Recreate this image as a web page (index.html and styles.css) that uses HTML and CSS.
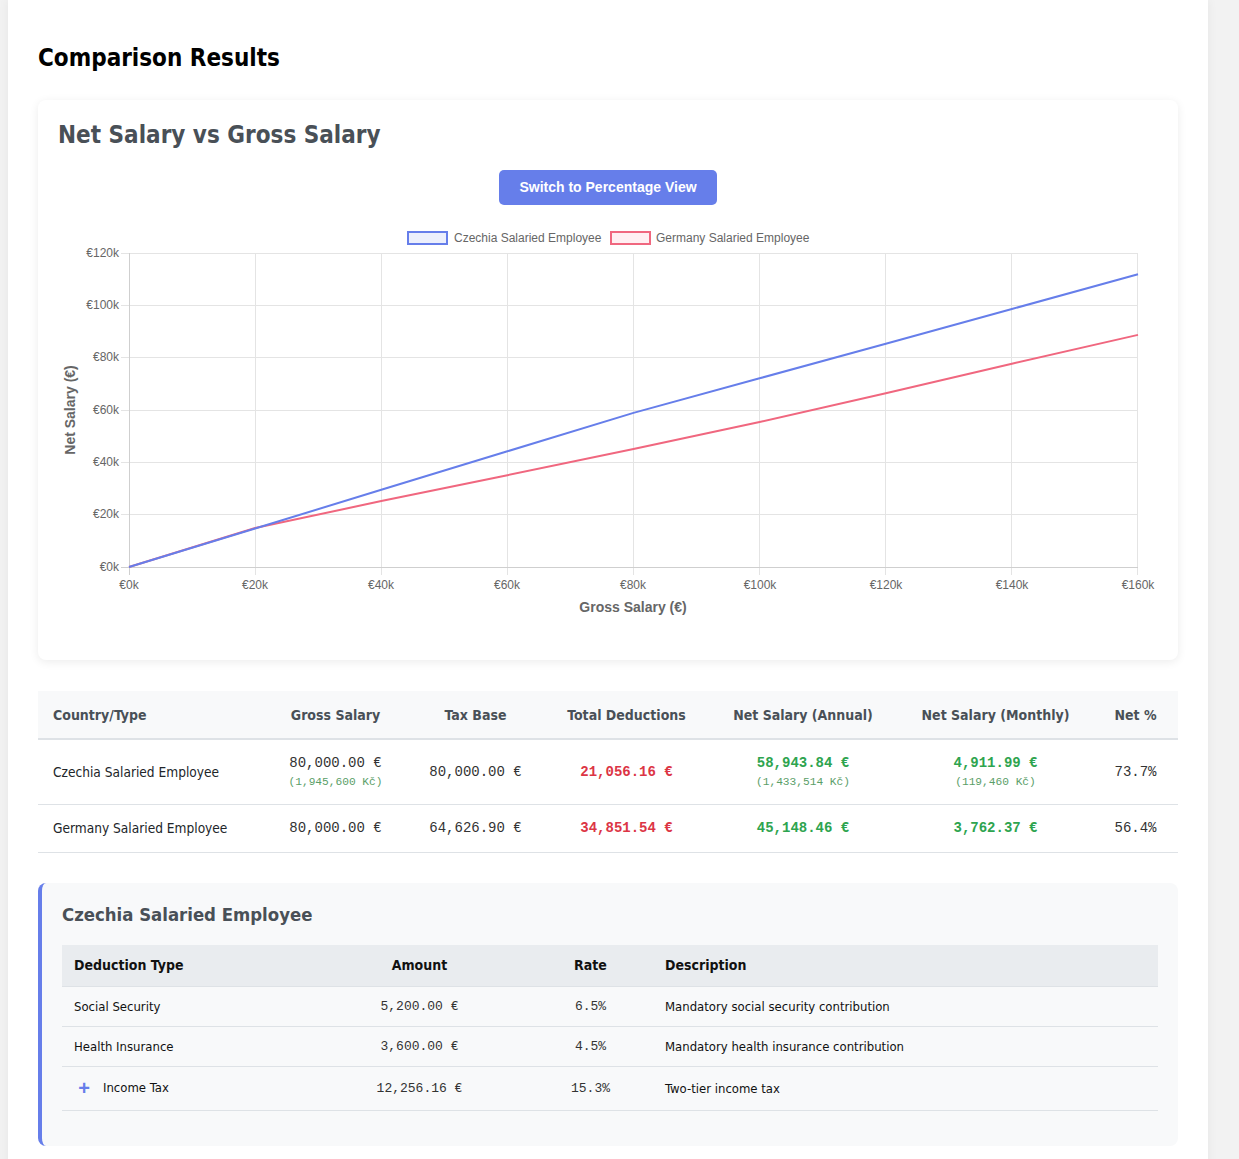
FILE: index.html
```html
<!DOCTYPE html>
<html lang="en">
<head>
<meta charset="utf-8">
<title>Comparison Results</title>
<link rel="stylesheet" href="styles.css">
</head>
<body>
<div class="page">
  <h2 class="section-title">Comparison Results</h2>

  <div class="chart-card">
    <h3 class="card-title">Net Salary vs Gross Salary</h3>
    <div class="toggle-row"><button class="toggle-btn">Switch to Percentage View</button></div>
    <div class="chart-wrap">
      <svg class="chart" width="1100" height="400" viewBox="0 0 1100 400">
        <!-- legend -->
        <rect x="350" y="11" width="39" height="12" fill="rgba(102,126,234,0.12)" stroke="#667eea" stroke-width="2"/>
        <text class="lg" x="396" y="21">Czechia Salaried Employee</text>
        <rect x="553" y="11" width="39" height="12" fill="rgba(255,99,132,0.1)" stroke="#f0677f" stroke-width="2"/>
        <text class="lg" x="598" y="21">Germany Salaried Employee</text>

        <!-- grid -->
        <g stroke="#e4e4e4" stroke-width="1">
          <line x1="63" y1="32.5" x2="1080" y2="32.5"/>
          <line x1="63" y1="84.5" x2="1080" y2="84.5"/>
          <line x1="63" y1="136.5" x2="1080" y2="136.5"/>
          <line x1="63" y1="189.5" x2="1080" y2="189.5"/>
          <line x1="63" y1="241.5" x2="1080" y2="241.5"/>
          <line x1="63" y1="293.5" x2="1080" y2="293.5"/>
          <line x1="197.5" y1="32" x2="197.5" y2="354"/>
          <line x1="323.5" y1="32" x2="323.5" y2="354"/>
          <line x1="449.5" y1="32" x2="449.5" y2="354"/>
          <line x1="575.5" y1="32" x2="575.5" y2="354"/>
          <line x1="701.5" y1="32" x2="701.5" y2="354"/>
          <line x1="827.5" y1="32" x2="827.5" y2="354"/>
          <line x1="953.5" y1="32" x2="953.5" y2="354"/>
          <line x1="1079.5" y1="32" x2="1079.5" y2="354"/>
        </g>
        <g stroke="#cfcfcf" stroke-width="1">
          <line x1="63" y1="346.5" x2="1080" y2="346.5"/>
          <line x1="71.5" y1="32" x2="71.5" y2="354"/>
        </g>

        <!-- y tick labels -->
        <g class="tick" text-anchor="end">
          <text x="61" y="36">€120k</text>
          <text x="61" y="88">€100k</text>
          <text x="61" y="140">€80k</text>
          <text x="61" y="193">€60k</text>
          <text x="61" y="245">€40k</text>
          <text x="61" y="297">€20k</text>
          <text x="61" y="350">€0k</text>
        </g>
        <!-- x tick labels -->
        <g class="tick" text-anchor="middle">
          <text x="71" y="368">€0k</text>
          <text x="197" y="368">€20k</text>
          <text x="323" y="368">€40k</text>
          <text x="449" y="368">€60k</text>
          <text x="575" y="368">€80k</text>
          <text x="702" y="368">€100k</text>
          <text x="828" y="368">€120k</text>
          <text x="954" y="368">€140k</text>
          <text x="1080" y="368">€160k</text>
        </g>

        <text class="axis-title" x="575" y="391" text-anchor="middle">Gross Salary (€)</text>
        <text class="axis-title" x="0" y="0" text-anchor="middle" transform="translate(17 189) rotate(-90)">Net Salary (€)</text>

        <!-- data lines -->
        <polyline fill="none" stroke="#f0677f" stroke-width="2" stroke-linejoin="round"
          points="71,346 197.1,307 323.3,280.1 449.4,254.2 575.5,228 701.6,201 827.8,172.3 953.9,142.7 1080,113.9"/>
        <polyline fill="none" stroke="#667eea" stroke-width="2" stroke-linejoin="round"
          points="71,346 197.1,307.5 323.3,268.8 449.4,230.3 575.5,191.9 701.6,157.3 827.8,122.8 953.9,88 1080,53.2"/>
      </svg>
    </div>
  </div>

  <table class="results">
    <colgroup>
      <col class="c-country"><col class="c-gross"><col class="c-base"><col class="c-ded"><col class="c-annual"><col class="c-month"><col class="c-pct">
    </colgroup>
    <thead>
      <tr>
        <th class="left">Country/Type</th>
        <th>Gross Salary</th>
        <th>Tax Base</th>
        <th>Total Deductions</th>
        <th>Net Salary (Annual)</th>
        <th>Net Salary (Monthly)</th>
        <th>Net %</th>
      </tr>
    </thead>
    <tbody>
      <tr>
        <td class="left">Czechia Salaried Employee</td>
        <td class="mono">80,000.00 €<span class="sub">(1,945,600 Kč)</span></td>
        <td class="mono">80,000.00 €</td>
        <td class="mono neg">21,056.16 €</td>
        <td class="mono pos">58,943.84 €<span class="sub">(1,433,514 Kč)</span></td>
        <td class="mono pos">4,911.99 €<span class="sub">(119,460 Kč)</span></td>
        <td class="mono">73.7%</td>
      </tr>
      <tr>
        <td class="left">Germany Salaried Employee</td>
        <td class="mono">80,000.00 €</td>
        <td class="mono">64,626.90 €</td>
        <td class="mono neg">34,851.54 €</td>
        <td class="mono pos">45,148.46 €</td>
        <td class="mono pos">3,762.37 €</td>
        <td class="mono">56.4%</td>
      </tr>
    </tbody>
  </table>

  <div class="breakdown">
    <h3 class="breakdown-title">Czechia Salaried Employee</h3>
    <table class="ded">
      <colgroup>
        <col class="d-type"><col class="d-amount"><col class="d-rate"><col class="d-desc">
      </colgroup>
      <thead>
        <tr>
          <th class="left">Deduction Type</th>
          <th>Amount</th>
          <th>Rate</th>
          <th class="left">Description</th>
        </tr>
      </thead>
      <tbody>
        <tr>
          <td class="left">Social Security</td>
          <td class="mono">5,200.00 €</td>
          <td class="mono">6.5%</td>
          <td class="left">Mandatory social security contribution</td>
        </tr>
        <tr>
          <td class="left">Health Insurance</td>
          <td class="mono">3,600.00 €</td>
          <td class="mono">4.5%</td>
          <td class="left">Mandatory health insurance contribution</td>
        </tr>
        <tr>
          <td class="left"><span class="expand">+</span>Income Tax</td>
          <td class="mono">12,256.16 €</td>
          <td class="mono">15.3%</td>
          <td class="left">Two-tier income tax</td>
        </tr>
      </tbody>
    </table>
  </div>
</div>
</body>
</html>
```

FILE: styles.css
```css
html, body {
  margin: 0;
  padding: 0;
}

body {
  background: #f2f2f2;
  font-family: "DejaVu Sans Condensed", "DejaVu Sans", sans-serif;
  font-stretch: condensed;
  color: #212529;
}

.page {
  margin-left: 8px;
  width: 1200px;
  min-height: 1159px;
  box-sizing: border-box;
  padding: 30px 30px 40px;
  background: #fff;
  box-shadow: 0 0 10px rgba(0, 0, 0, 0.06);
}

.section-title {
  margin: 14px 0 28px;
  font-size: 24px;
  line-height: 28px;
  font-weight: bold;
  color: #000;
}

.chart-card {
  background: #fff;
  border-radius: 8px;
  box-shadow: 0 2px 10px rgba(0, 0, 0, 0.08);
  padding: 20px 20px 19px;
}

.card-title {
  margin: 0 0 22px;
  font-size: 24px;
  line-height: 28px;
  padding-top: 1px;
  font-weight: bold;
  color: #495057;
}

.toggle-row {
  text-align: center;
  margin-top: -1px;
}

.toggle-btn {
  background: #667eea;
  color: #fff;
  border: 0;
  border-radius: 5px;
  padding: 10px 20px;
  font-family: "Liberation Sans", Arial, sans-serif;
  font-weight: bold;
  font-size: 14px;
  line-height: 15px;
  cursor: pointer;
}

.chart-wrap {
  margin-top: 16px;
  height: 400px;
  margin-bottom: 20px;
}

.chart {
  display: block;
  font-family: "Liberation Sans", Arial, sans-serif;
}

.chart .lg,
.chart .tick text {
  font-size: 12px;
  fill: #666;
}

.chart .axis-title {
  font-size: 14px;
  font-weight: bold;
  fill: #666;
}

/* results table */
.results {
  width: 100%;
  margin-top: 31px;
  border-collapse: collapse;
  table-layout: fixed;
}

.c-country { width: 227px; }
.c-gross { width: 141px; }
.c-base { width: 139px; }
.c-ded { width: 163px; }
.c-annual { width: 190px; }
.c-month { width: 195px; }
.c-pct { width: 85px; }

.results th {
  background: #f8f9fa;
  color: #495057;
  font-size: 14px;
  font-weight: bold;
  line-height: 16px;
  padding: 16px 15px 15px;
  text-align: center;
  border-bottom: 2px solid #dee2e6;
  white-space: nowrap;
}

.results td {
  padding: 15px;
  font-size: 14px;
  line-height: 17px;
  text-align: center;
  vertical-align: middle;
  border-bottom: 1px solid #dee2e6;
  color: #212529;
  white-space: nowrap;
}

.results td.left {
  font-size: 13.6px;
}

.results .left,
.ded .left {
  text-align: left;
}

.mono {
  font-family: "Liberation Mono", "Courier New", monospace;
  font-stretch: normal;
}

.results td.mono {
  color: #333;
}

.results td.neg {
  color: #dc3545;
  font-weight: bold;
}

.results td.pos {
  color: #2ea44f;
  font-weight: bold;
}

.sub {
  display: block;
  margin-top: 3px;
  font-size: 11.2px;
  line-height: 14px;
  font-weight: normal;
  color: #5a9e68;
}

/* breakdown card */
.breakdown {
  margin-top: 30px;
  background: #f8f9fa;
  border-left: 4px solid #667eea;
  border-radius: 8px;
  padding: 20px 20px 35px;
}

.breakdown-title {
  margin: 0 0 18px;
  font-size: 18.4px;
  line-height: 24px;
  font-weight: bold;
  color: #495057;
}

.ded {
  width: 100%;
  border-collapse: collapse;
  table-layout: fixed;
}

.d-type { width: 249px; }
.d-amount { width: 217px; }
.d-rate { width: 125px; }
.d-desc { width: 505px; }

.ded th {
  background: #e9ecef;
  color: #111;
  font-size: 14px;
  font-weight: bold;
  line-height: 17px;
  padding: 12px;
  text-align: center;
  border-bottom: 1px solid #dee2e6;
}

.ded td {
  padding: 12px;
  font-size: 13px;
  line-height: 15px;
  text-align: center;
  vertical-align: middle;
  border-bottom: 1px solid #dee2e6;
  color: #111;
}

.ded td.mono {
  color: #333;
}

.expand {
  display: inline-block;
  width: 20px;
  height: 19px;
  margin-right: 9px;
  line-height: 19px;
  text-align: center;
  vertical-align: middle;
  font-family: "Liberation Sans", Arial, sans-serif;
  font-size: 20px;
  font-weight: bold;
  color: #667eea;
}
```
